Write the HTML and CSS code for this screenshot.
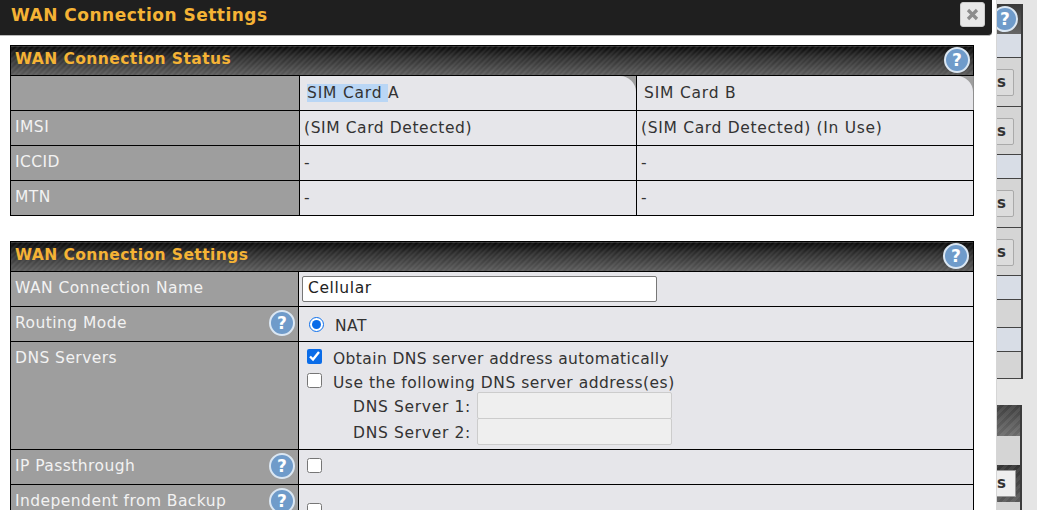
FILE: index.html
```html
<!DOCTYPE html>
<html lang="en">
<head>
<meta charset="utf-8">
<title>WAN Connection Settings</title>
<link rel="stylesheet" href="styles.css">
</head>
<body>
<div class="backdrop">
  <div class="bg-panel bg-panel-top">
    <div class="bg-head"><span class="help bg-help">?</span></div>
    <div class="bg-row blue h24"></div>
    <div class="bg-row grey h49"><span class="bg-btn">s</span></div>
    <div class="bg-row grey h48"><span class="bg-btn">s</span></div>
    <div class="bg-row blue h24"></div>
    <div class="bg-row grey h49"><span class="bg-btn">s</span></div>
    <div class="bg-row grey h48"><span class="bg-btn">s</span></div>
    <div class="bg-row blue h24"></div>
    <div class="bg-row grey h28"></div>
    <div class="bg-row blue h24"></div>
    <div class="bg-row grey h27"></div>
  </div>
  <div class="bg-panel bg-panel-bottom">
    <div class="bg-head2"></div>
    <div class="bg-row2 h29"></div>
    <div class="bg-stripe"><span class="bg-btn bg-btn-white">s</span></div>
    <div class="bg-row2 h10"></div>
  </div>
</div>

<div class="dialog">
  <header class="titlebar">
    <h1>WAN Connection Settings</h1>
    <button class="close" type="button" aria-label="Close">
      <svg width="13" height="13" viewBox="0 0 13 13"><path d="M2 2l9 9M11 2l-9 9" stroke="#8c8c8c" stroke-width="3.2" fill="none"/></svg>
    </button>
  </header>

  <table class="panel first">
    <colgroup><col class="c1"><col class="c2"><col class="c3"></colgroup>
    <tr class="head"><th colspan="3"><div class="head-in"><span>WAN Connection Status</span><span class="help">?</span></div></th></tr>
    <tr class="r35">
      <td class="lab"></td>
      <td class="tab"><div class="tab-in"><span class="sel">SIM Card </span>A</div></td>
      <td class="tab tab-last"><div class="tab-in">SIM Card B</div></td>
    </tr>
    <tr class="r35"><td class="lab">IMSI</td><td class="val wide-s">(SIM Card Detected)</td><td class="val wide">(SIM Card Detected) (In Use)</td></tr>
    <tr class="r35"><td class="lab">ICCID</td><td class="val">-</td><td class="val">-</td></tr>
    <tr class="r35"><td class="lab">MTN</td><td class="val">-</td><td class="val">-</td></tr>
  </table>

  <table class="panel second">
    <colgroup><col class="c1b"><col class="c23"></colgroup>
    <tr class="head"><th colspan="2"><div class="head-in"><span>WAN Connection Settings</span><span class="help">?</span></div></th></tr>
    <tr class="r35">
      <td class="lab">WAN Connection Name</td>
      <td class="val"><input class="name" type="text" value="Cellular"></td>
    </tr>
    <tr class="r35">
      <td class="lab"><div class="lab-in">Routing Mode<span class="help">?</span></div></td>
      <td class="val"><label class="opt nat"><input type="radio" checked><span>NAT</span></label></td>
    </tr>
    <tr class="dns">
      <td class="lab top">DNS Servers</td>
      <td class="val top">
        <label class="opt chk chk-a"><input type="checkbox" checked>Obtain DNS server address automatically</label>
        <label class="opt chk chk-b"><input type="checkbox">Use the following DNS server address(es)</label>
        <div class="srv srv-first"><span>DNS Server 1:</span><input type="text" disabled></div>
        <div class="srv"><span>DNS Server 2:</span><input type="text" disabled></div>
      </td>
    </tr>
    <tr class="r35">
      <td class="lab"><div class="lab-in">IP Passthrough<span class="help">?</span></div></td>
      <td class="val"><label class="opt solo"><input type="checkbox"></label></td>
    </tr>
    <tr class="last">
      <td class="lab top"><div class="lab-in">Independent from Backup<span class="help">?</span></div></td>
      <td class="val top"><label class="opt solo solo-low"><input type="checkbox"></label></td>
    </tr>
  </table>
</div>
</body>
</html>
```
FILE: styles.css
```css
* { box-sizing: border-box; }
html, body { margin: 0; height: 510px; overflow: hidden; }
body {
  background: #e5e5e5;
  font-family: "DejaVu Sans", Verdana, sans-serif;
  font-size: 15.5px;
  letter-spacing: .45px;
  color: #333;
}

/* page behind the dialog */
.backdrop { position: absolute; left: 996px; top: 0; width: 41px; height: 510px; overflow: hidden; }
.bg-panel { position: absolute; left: 0; width: 27px; overflow: hidden; border-right: 2px solid #3c3c3c; }
.bg-panel-top { top: 4px; }
.bg-panel-bottom { top: 405px; width: 26px; height: 105px; }
.bg-head { height: 30px; background: linear-gradient(#3a3a3a, #666); position: relative; }
.bg-head2 { height: 31px; background: repeating-linear-gradient(135deg, rgba(255,255,255,.07) 0 3px, transparent 3px 6px), linear-gradient(#3f3f3f, #6c6c6c); }
.bg-help { position: absolute; left: -4px; top: 2px; }
.bg-row { border-bottom: 1px solid #444; position: relative; }
.bg-row2 { background: #d5d5d5; }
.blue { background: #d8dde6; }
.grey { background: #d5d5d5; }
.h24 { height: 24px; }
.h27 { height: 27px; }
.h28 { height: 28px; }
.h29 { height: 29px; }
.h48 { height: 48px; }
.h49 { height: 49px; }
.h10 { height: 10px; }
.bg-btn {
  position: absolute; left: -3px; top: 11px; width: 21px; height: 27px;
  border: 1px solid #aaa; border-radius: 2px; background: #dcdcdc;
  font-size: 15px; font-weight: bold; color: #333; line-height: 25px; padding-left: 3px;
}
.bg-stripe { position: relative; height: 37px; background: repeating-linear-gradient(135deg, rgba(255,255,255,.07) 0 3px, transparent 3px 6px), linear-gradient(#333, #5a5a5a); }
.bg-btn-white { top: 5px; width: 23px; background: #eee; border: 1px solid #999; border-radius: 0; }

/* dialog */
.dialog { position: absolute; left: 0; top: 0; width: 997px; height: 510px; background: #fff; overflow: hidden; border-right: 1px solid #d6d6d6; }
.titlebar {
  width: 992px; height: 36px; background: #1f1f1f; border-bottom: 1px solid #bbb; border-bottom-right-radius: 4px;
  display: flex; align-items: center; justify-content: space-between; padding: 0 7px 8px 11px;
}
.titlebar h1 { margin: 2px 0 0; font-size: 17px; font-weight: bold; color: #f5b335; letter-spacing: .5px; }
.close {
  width: 25px; height: 25px; margin: 2px 0 0 0; padding: 0; border: 1px solid #ccc; border-radius: 3px; background: #e8e8e8;
  display: flex; align-items: center; justify-content: center;
}

.panel { border-collapse: collapse; table-layout: fixed; margin-left: 10px; }
.first { margin-top: 9px; width: 964px; }
.second { margin-top: 25px; width: 963px; }
.c1 { width: 289px; }
.c1b { width: 288px; }
.c2, .c3 { width: 337px; }
.c23 { width: 675px; }
.panel td { border: 1px solid #000; padding: 0; }
.head th {
  padding: 0; border: 1px solid #000; height: 30px;
  background: repeating-linear-gradient(135deg, rgba(255,255,255,.07) 0 2px, transparent 2px 4px), linear-gradient(#080808 0, #2c2c2c 35%, #5c5c5c 100%);
}
.head-in { display: flex; align-items: center; justify-content: space-between; padding: 0 4px 4px 4px; height: 29px; }
.first .head-in { padding-right: 3px; }
.head-in .help { margin-top: 3px; }
.head-in > span:first-child { font-size: 15.5px; font-weight: bold; color: #f5b335; letter-spacing: .43px; }
.r35 { height: 35px; }
.dns { height: 108px; }
.last { height: 60px; }
.lab { background: #9e9e9e; color: #f2f2f2; padding-left: 4px !important; padding-bottom: 3px !important; }
.lab-in { display: flex; align-items: center; justify-content: space-between; padding-right: 3px; }
.val { background: #e6e6ea; padding-left: 4px !important; }
.wide { letter-spacing: .68px; }
.wide-s { letter-spacing: .58px; }
.top { vertical-align: top; }
.lab.top { padding-top: 7px !important; }
.last .lab.top { padding-top: 3px !important; }
.tab { background: #9e9e9e; }
.panel .tab-last { border-right-color: #8f8f8f; }
.tab-in {
  height: 34px; background: #e6e6ea; border-top-right-radius: 16px;
  padding: 0 0 1px 7px; display: flex; align-items: center; white-space: pre; letter-spacing: .8px;
}
.sel { background: #b9d6f5; }
.help {
  display: inline-block; width: 26px; height: 26px; border-radius: 50%; flex: none;
  background: #6f9bca; border: 2px solid #dbe7f3;
  color: #fff; font-size: 17px; font-weight: bold; line-height: 22px; text-align: center; letter-spacing: 0;
}
.name { display: block; width: 355px; height: 26px; margin: -1px 0 0 -1px; padding: 0 5px 2px; border: 1px solid #777; border-radius: 2px; background: #fff; font: inherit; letter-spacing: .6px; color: #222; }
.opt { display: flex; align-items: center; }
.opt input { margin: 0; accent-color: #0a6ce8; flex: none; }
.nat input { width: 15px; height: 15px; margin: 0 11px 0 6px; }
.nat span { padding-top: 4px; }
.chk { height: 24px; }
.chk input { width: 15px; height: 15px; margin: -5px 11px 0 4px; }
.chk-a { margin-top: 5px; letter-spacing: .4px; }
.chk-b { letter-spacing: .5px; }
.solo input { width: 15px; height: 15px; margin: -4px 0 0 4px; }
.solo-low input { margin-top: 18px; }
.srv { display: flex; align-items: center; justify-content: flex-end; width: 369px; height: 26px; letter-spacing: .68px; }
.srv-first { margin-top: -3px; }
.srv span { margin-right: 6px; padding-top: 4px; }
.srv input { width: 195px; height: 27px; border: 1px solid #ccc; border-radius: 2px; background: #efefef; }
```
